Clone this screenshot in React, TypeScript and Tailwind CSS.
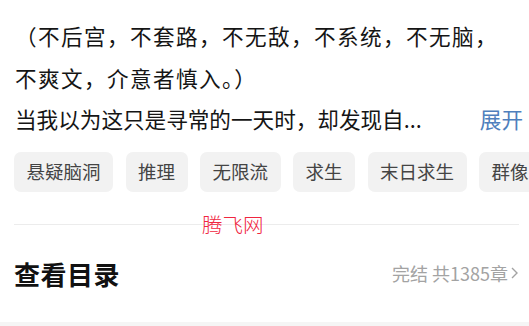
import React from "react";

const tags = ["悬疑脑洞", "推理", "无限流", "求生", "末日求生", "群像"];

export default function App() {
  return (
    <div
      className="relative w-[529px] h-[326px] overflow-hidden bg-white text-[#151515]"
      style={{ fontFamily: '"Noto Sans CJK SC", "Noto Sans", sans-serif' }}
    >
      <div className="pt-[15px] pl-[15px] pr-[6px]">
        <p className="whitespace-nowrap text-[21.6px] leading-[41.5px] tracking-[1.4px]">
          （不后宫，不套路，不无敌，不系统，不无脑，
          <br />
          不爽文，介意者慎入。）
        </p>
        <div className="flex items-center justify-between whitespace-nowrap text-[21.6px] leading-[41.5px]">
          <span>当我以为这只是寻常的一天时，却发现自...</span>
          <span className="text-[#4f7fbd]">展开</span>
        </div>
      </div>

      <div className="mt-[12px] flex gap-[12.5px] overflow-hidden whitespace-nowrap pl-[14px]">
        {tags.map((t) => (
          <span
            key={t}
            className="flex h-[40px] shrink-0 items-center rounded-[7px] bg-[#f2f2f2] px-[12.5px] text-[18.5px] text-[#444]"
          >
            {t}
          </span>
        ))}
      </div>

      <div className="mx-[14px] mr-[10px] mt-[32px] h-px bg-[#ececec]" />

      <div className="flex h-[97px] items-center justify-between pl-[14px] pr-[10px]">
        <span className="text-[26px] font-bold tracking-[0.5px] text-[#111]">查看目录</span>
        <span className="flex items-center text-[18px] text-[#a3a3a3]">
          完结 共1385章
          <svg width="9" height="14" viewBox="0 0 9 14" className="ml-[2px]">
            <path d="M2 2l5 5-5 5" fill="none" stroke="#a3a3a3" strokeWidth="1.4" />
          </svg>
        </span>
      </div>

      <div className="h-[4px] bg-[#f5f5f5]" />

      <span className="absolute left-[202px] top-[214px] text-[20.5px] font-light leading-none text-[#f0263f]">
        腾飞网
      </span>
    </div>
  );
}
